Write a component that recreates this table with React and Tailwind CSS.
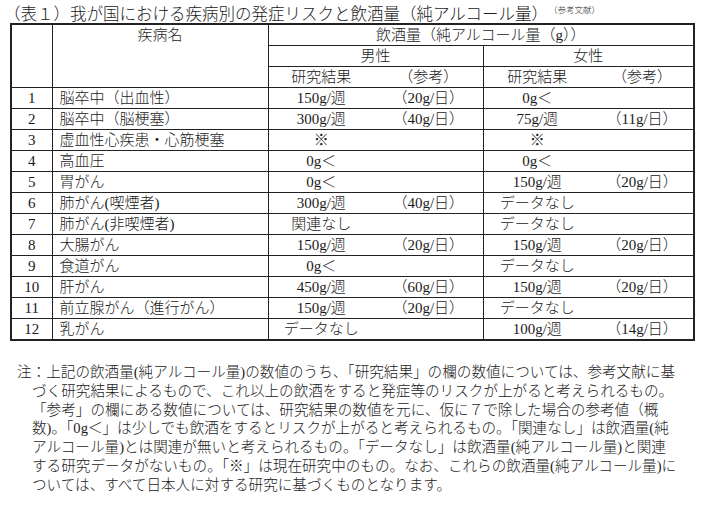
import React from 'react';

const rows = [
  [1, '脳卒中（出血性）', '150g/週', '（20g/日）', '0g＜', ''],
  [2, '脳卒中（脳梗塞）', '300g/週', '（40g/日）', '75g/週', '（11g/日）'],
  [3, '虚血性心疾患・心筋梗塞', '※', '', '※', ''],
  [4, '高血圧', '0g＜', '', '0g＜', ''],
  [5, '胃がん', '0g＜', '', '150g/週', '（20g/日）'],
  [6, '肺がん(喫煙者)', '300g/週', '（40g/日）', 'データなし', ''],
  [7, '肺がん(非喫煙者)', '関連なし', '', 'データなし', ''],
  [8, '大腸がん', '150g/週', '（20g/日）', '150g/週', '（20g/日）'],
  [9, '食道がん', '0g＜', '', 'データなし', ''],
  [10, '肝がん', '450g/週', '（60g/日）', '150g/週', '（20g/日）'],
  [11, '前立腺がん（進行がん）', '150g/週', '（20g/日）', 'データなし', ''],
  [12, '乳がん', 'データなし', '', '100g/週', '（14g/日）'],
];

const notes = [
  '注：上記の飲酒量(純アルコール量)の数値のうち、「研究結果」の欄の数値については、参考文献に基',
  'づく研究結果によるもので、これ以上の飲酒をすると発症等のリスクが上がると考えられるもの。',
  '「参考」の欄にある数値については、研究結果の数値を元に、仮に７で除した場合の参考値（概',
  '数)。「0g＜」は少しでも飲酒をするとリスクが上がると考えられるもの。「関連なし」は飲酒量(純',
  'アルコール量)とは関連が無いと考えられるもの。「データなし」は飲酒量(純アルコール量)と関連',
  'する研究データがないもの。「※」は現在研究中のもの。なお、これらの飲酒量(純アルコール量)に',
  'ついては、すべて日本人に対する研究に基づくものとなります。',
];

const cell = 'h-[20.8px] p-0 align-middle border-y border-[#222] leading-[20px]';

function App() {
  return (
    <div className="w-[706px] h-[505px] bg-white text-[#1a1a1a] font-light font-['Liberation_Serif','Noto_Sans_CJK_JP',serif] overflow-hidden">
      {/* TITLE */}
      <div className="flex items-start pt-[5px] pl-[4px] h-[23px]">
        <span className="text-[16.5px] leading-[20px] whitespace-nowrap">
          （表１）我が国における疾病別の発症リスクと飲酒量（純アルコール量）
        </span>
        <span className="text-[8.5px] leading-[10px] ml-[1px] whitespace-nowrap">（参考文献）</span>
      </div>

      {/* TABLE */}
      <table className="ml-[10px] w-[683px] table-fixed border-collapse border-2 border-[#222] text-[15px]">
        <colgroup>
          <col className="w-[41px]" />
          <col className="w-[216px]" />
          <col className="w-[106px]" />
          <col className="w-[109px]" />
          <col className="w-[108px]" />
          <col className="w-[103px]" />
        </colgroup>
        <thead>
          <tr>
            <th rowSpan={3} className="p-0 border border-[#222]"></th>
            <th rowSpan={3} className="p-0 align-top font-light text-center border border-[#222] leading-[20px]">
              疾病名
            </th>
            <th colSpan={4} className={`${cell} font-light text-center border-x`}>
              飲酒量（純アルコール量（g））
            </th>
          </tr>
          <tr>
            <th colSpan={2} className={`${cell} font-light text-center border-l`}>男性</th>
            <th colSpan={2} className={`${cell} font-light text-center border-x`}>女性</th>
          </tr>
          <tr>
            <th className={`${cell} font-light text-center border-l`}>研究結果</th>
            <th className={`${cell} font-light text-center`}>（参考）</th>
            <th className={`${cell} font-light text-center border-l`}>研究結果</th>
            <th className={`${cell} font-light text-center border-r`}>（参考）</th>
          </tr>
        </thead>
        <tbody>
          {rows.map(([no, name, mRes, mRef, fRes, fRef]) => (
            <tr key={no}>
              <td className={`${cell} text-center border-x`}>{no}</td>
              <td className={`${cell} pl-[7px] border-r whitespace-nowrap`}>{name}</td>
              <td className={`${cell} text-center whitespace-nowrap`}>{mRes}</td>
              <td className={`${cell} text-center whitespace-nowrap`}>{mRef}</td>
              <td className={`${cell} text-center border-l whitespace-nowrap`}>{fRes}</td>
              <td className={`${cell} text-center border-r whitespace-nowrap`}>{fRef}</td>
            </tr>
          ))}
        </tbody>
      </table>

      {/* NOTES */}
      <div className="mt-[22px] text-[14.6px] leading-[18.8px]">
        {notes.map((line, i) => (
          <div key={i} className={`whitespace-nowrap ${i === 0 ? 'pl-[17px]' : 'pl-[32px]'}`}>
            {line}
          </div>
        ))}
      </div>
    </div>
  );
}

export default App;
